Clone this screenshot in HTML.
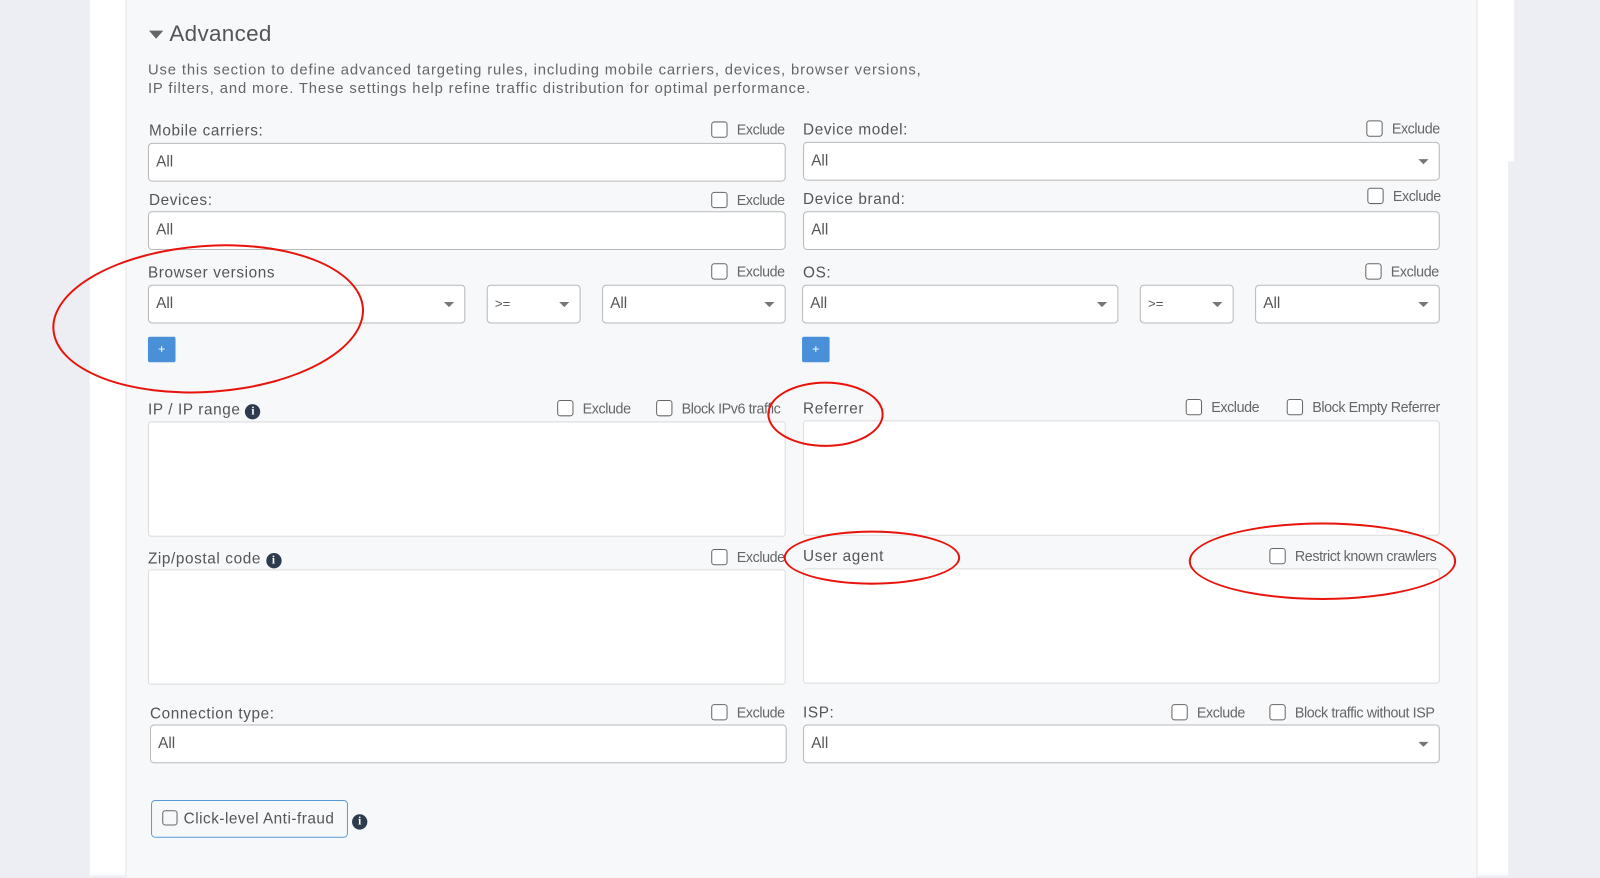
<!DOCTYPE html>
<html><head><meta charset="utf-8">
<style>
*{box-sizing:border-box;margin:0;padding:0}
body{width:1600px;height:846px;overflow:hidden;background:#eceef3;font-family:"Liberation Sans",sans-serif;position:relative}
#w{position:absolute;left:0;top:0;width:1568px;height:830px;transform:scale(1.0204);transform-origin:0 0}
.a{position:absolute}
.lbl{position:absolute;font-size:15px;color:#555;letter-spacing:0.6px}
.inp{position:absolute;background:#fff;border:1px solid #b9b9b9;border-radius:4px;height:38px;font-size:15px;color:#555;padding:9px 7px}
.ta{position:absolute;background:#fff;border:1px solid #dcdcdc;border-radius:3px}
.arr{position:absolute;right:10px;top:16px;width:0;height:0;border-left:5px solid transparent;border-right:5px solid transparent;border-top:5px solid #777}
.cb{position:absolute;font-size:14px;color:#666;letter-spacing:-0.4px;white-space:nowrap}
.cb i{display:inline-block;width:16px;height:16px;border:1.5px solid #666;border-radius:3px;vertical-align:-3px;margin-right:9px;background:#fff}
.plus{position:absolute;width:27px;height:25px;background:#4a90d9;border-radius:2px;color:#fff;font-size:12px;text-align:center;line-height:25px}
.info{display:inline-block;width:15px;height:15px;border-radius:50%;background:#2d3b4e;color:#fff;font-size:11px;font-weight:bold;text-align:center;line-height:15px;font-family:"Liberation Serif",serif;vertical-align:0px;letter-spacing:0}
.ell{position:absolute;border:2px solid #e8140c;border-radius:50%}
</style></head><body><div id="w">
<div class="a" style="left:88px;top:0;width:1396px;height:158px;background:#fff"></div>
<div class="a" style="left:88px;top:158px;width:1390px;height:700px;background:#fff"></div>
<div class="a" style="left:123px;top:0;width:1325px;height:860px;background:#f7f8fa;border-left:1px solid #e4e6ea;border-right:1px solid #e4e6ea"></div>

<div class="a" style="left:146px;top:30px;width:0;height:0;border-left:7px solid transparent;border-right:7px solid transparent;border-top:8px solid #666"></div>
<div class="a" style="left:166px;top:20px;font-size:22px;color:#555;letter-spacing:0.3px">Advanced</div>
<div class="a" style="left:145px;top:60px;font-size:14.5px;color:#666;line-height:18px;letter-spacing:0.85px;white-space:nowrap">Use this section to define advanced targeting rules, including mobile carriers, devices, browser versions,<br>IP filters, and more. These settings help refine traffic distribution for optimal performance.</div>

<div class="lbl" style="left:146px;top:120px">Mobile carriers:</div>
<div class="cb" style="left:697px;top:119px"><i></i>Exclude</div>
<div class="inp" style="left:145px;top:140px;width:625px">All</div>
<div class="lbl" style="left:787px;top:119px">Device model:</div>
<div class="cb" style="left:1339px;top:118px"><i></i>Exclude</div>
<div class="inp" style="left:787px;top:139px;width:624px">All<span class="arr"></span></div>

<div class="lbl" style="left:146px;top:188px">Devices:</div>
<div class="cb" style="left:697px;top:188px"><i></i>Exclude</div>
<div class="inp" style="left:145px;top:207px;width:625px">All</div>
<div class="lbl" style="left:787px;top:187px">Device brand:</div>
<div class="cb" style="left:1340px;top:184px"><i></i>Exclude</div>
<div class="inp" style="left:787px;top:207px;width:624px">All</div>

<div class="lbl" style="left:145px;top:259px">Browser versions</div>
<div class="cb" style="left:697px;top:258px"><i></i>Exclude</div>
<div class="inp" style="left:145px;top:279px;width:311px">All<span class="arr"></span></div>
<div class="inp" style="left:477px;top:279px;width:92px;font-size:13px;padding-top:10px">&gt;=<span class="arr"></span></div>
<div class="inp" style="left:590px;top:279px;width:180px">All<span class="arr"></span></div>
<div class="lbl" style="left:787px;top:259px">OS:</div>
<div class="cb" style="left:1338px;top:258px"><i></i>Exclude</div>
<div class="inp" style="left:786px;top:279px;width:310px">All<span class="arr"></span></div>
<div class="inp" style="left:1117px;top:279px;width:92px;font-size:13px;padding-top:10px">&gt;=<span class="arr"></span></div>
<div class="inp" style="left:1230px;top:279px;width:181px">All<span class="arr"></span></div>
<div class="plus" style="left:145px;top:330px">+</div>
<div class="plus" style="left:786px;top:330px">+</div>

<div class="lbl" style="left:145px;top:393px">IP / IP range <span class="info">i</span></div>
<div class="cb" style="left:546px;top:392px"><i></i>Exclude</div>
<div class="cb" style="left:643px;top:392px"><i></i>Block IPv6 traffic</div>
<div class="ta" style="left:145px;top:413px;width:625px;height:113px"></div>
<div class="lbl" style="left:787px;top:392px">Referrer</div>
<div class="cb" style="left:1162px;top:391px"><i></i>Exclude</div>
<div class="cb" style="left:1261px;top:391px"><i></i>Block Empty Referrer</div>
<div class="ta" style="left:787px;top:412px;width:624px;height:113px"></div>

<div class="lbl" style="left:145px;top:539px">Zip/postal code <span class="info">i</span></div>
<div class="cb" style="left:697px;top:538px"><i></i>Exclude</div>
<div class="ta" style="left:145px;top:558px;width:625px;height:113px"></div>
<div class="lbl" style="left:787px;top:537px">User agent</div>
<div class="cb" style="left:1244px;top:537px"><i></i>Restrict known crawlers</div>
<div class="ta" style="left:787px;top:557px;width:624px;height:113px"></div>

<div class="lbl" style="left:147px;top:691px">Connection type:</div>
<div class="cb" style="left:697px;top:690px"><i></i>Exclude</div>
<div class="inp" style="left:147px;top:710px;width:624px">All</div>
<div class="lbl" style="left:787px;top:690px">ISP:</div>
<div class="cb" style="left:1148px;top:690px"><i></i>Exclude</div>
<div class="cb" style="left:1244px;top:690px"><i></i>Block traffic without ISP</div>
<div class="inp" style="left:787px;top:710px;width:624px">All<span class="arr"></span></div>

<div class="a" style="left:148px;top:784px;width:193px;height:37px;border:1px solid #5b9bd5;border-radius:4px;font-size:15px;color:#555;padding:9px 10px;white-space:nowrap;letter-spacing:0.5px"><span style="display:inline-block;width:15px;height:15px;border:1.5px solid #666;border-radius:3px;vertical-align:-2px;margin-right:6px"></span>Click-level Anti-fraud</div>
<div class="a" style="left:345px;top:795px"><span class="info">i</span></div>

<div class="ell" style="left:51px;top:240px;width:306px;height:145px;transform:rotate(-4deg)"></div>
<div class="ell" style="left:752px;top:374px;width:114px;height:64px"></div>
<div class="ell" style="left:768px;top:520px;width:173px;height:53px"></div>
<div class="ell" style="left:1165px;top:512px;width:262px;height:76px"></div>
</div></body></html>
